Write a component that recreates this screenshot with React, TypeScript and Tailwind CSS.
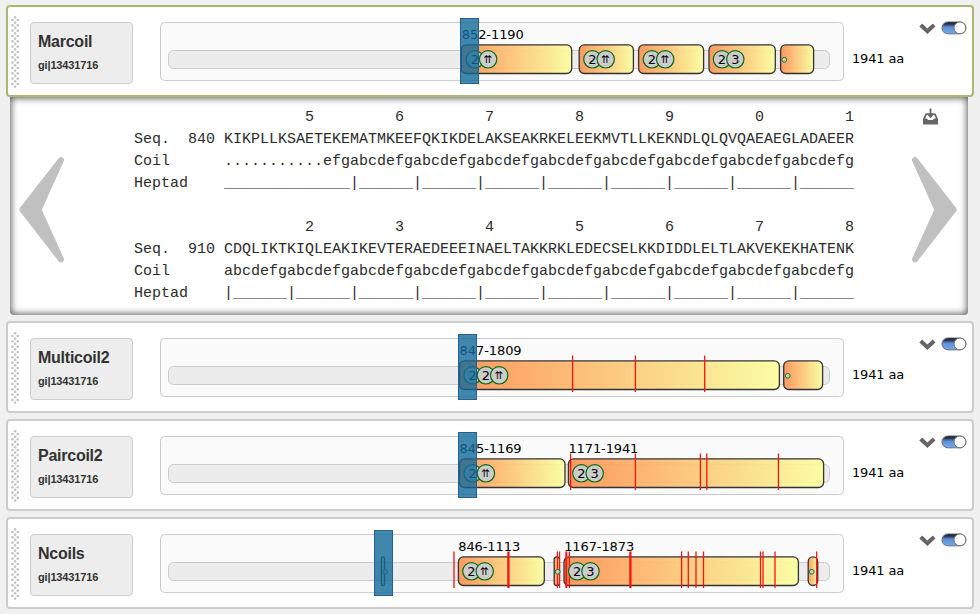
import React from 'react';

type Segment = { from: number; to: number; label?: string; labelX?: number; marks?: string[]; first?: number; dot?: number };
type Track = {
  name: string;
  active?: boolean;
  selector: number;
  segments: Segment[];
  breaks: [number, number][];
};

const UP = '⇈';

const tracks: Track[] = [
  {
    name: 'Marcoil',
    active: true,
    selector: 460,
    segments: [
      { from: 461.3, to: 571.7, label: '852-1190', labelX: 461.8, marks: ['2', UP], first: 474.8 },
      { from: 579.2, to: 633.4, marks: ['2', UP], first: 592.4 },
      { from: 638.6, to: 703.6, marks: ['2', UP], first: 651.9 },
      { from: 709, to: 775.3, marks: ['2', '3'], first: 722 },
      { from: 780.6, to: 813.6, dot: 784.3 },
    ],
    breaks: [],
  },
  {
    name: 'Multicoil2',
    selector: 458,
    segments: [
      { from: 459.4, to: 779.4, label: '847-1809', labelX: 459.6, marks: ['2', '2', UP], first: 472.6 },
      { from: 783.7, to: 822.6, dot: 787.8 },
    ],
    breaks: [[572.6, 1.3], [635.4, 1.3], [704.7, 1.3]],
  },
  {
    name: 'Paircoil2',
    selector: 458,
    segments: [
      { from: 459.4, to: 565, label: '845-1169', labelX: 459.6, marks: ['2', UP], first: 472.6 },
      { from: 568.4, to: 823.6, label: '1171-1941', labelX: 568.4, marks: ['2', '3'], first: 581.4 },
    ],
    breaks: [[570.6, 1.3], [635.4, 1.3], [700.4, 1.3], [706.8, 1.3], [778.4, 1.3]],
  },
  {
    name: 'Ncoils',
    selector: 374,
    segments: [
      { from: 381.4, to: 384.6, dot: 385 },
      { from: 458.4, to: 544.3, label: '846-1113', labelX: 458.2, marks: ['2', UP], first: 471.4 },
      { from: 554.2, to: 559.4, dot: 557.7 },
      { from: 564, to: 798.4, label: '1167-1873', labelX: 564.2, marks: ['2', '3'], first: 577.2 },
      { from: 808.2, to: 817.7, dot: 811.8 },
    ],
    breaks: [
      [454, 1.3], [508.4, 2.3], [557.4, 1.2], [559.6, 1.2], [566.3, 2], [569.4, 1.3], [630.4, 2.3],
      [681.6, 1.3], [688.3, 1.3], [696, 1.3], [703.5, 1.3], [760.5, 1.3], [763, 1.3], [775, 1.3], [816.7, 1.3],
    ],
  },
];

function Handle() {
  const dots: React.ReactNode[] = [];
  for (let i = 0; i < 13; i++) {
    const y = 4 + i * 5.33;
    dots.push(<circle key={`a${i}`} cx={1.5} cy={y} r={1.35} />, <circle key={`b${i}`} cx={6.7} cy={y} r={1.35} />);
  }
  for (let i = 0; i < 14; i++) dots.push(<circle key={`c${i}`} cx={4.1} cy={1.3 + i * 5.33} r={1.35} />);
  return <svg width="8" height="72" className="mt-[9px] shrink-0 fill-[#c6c6c6]">{dots}</svg>;
}

function Chart({ track }: { track: Track }) {
  const id = `grad-${track.name}`;
  return (
    <svg width="684" height="88" viewBox="160 2 684 88" className="ml-[27px] shrink-0 font-['DejaVu_Sans',Verdana,sans-serif] text-[13px]">
      <defs>
        <linearGradient id={id}>
          <stop offset="0" stopColor="#ff9050" />
          <stop offset="1" stopColor="#fbff9c" />
        </linearGradient>
      </defs>
      <rect x="160.5" y="17.5" width="683" height="58" rx="4" fill="#fafafa" stroke="#ccc" />
      <rect x="168.5" y="45.5" width="661" height="18" rx="5" fill="#ececec" stroke="#ccc" />
      {track.segments.map((s, i) => (
        <rect key={i} x={s.from} y="39.9" width={s.to - s.from} height="28.6" rx={Math.min(5, (s.to - s.from) / 2)}
          fill={`url(#${id})`} fillOpacity="0.9" stroke="#333" strokeWidth="1.3" />
      ))}
      {track.breaks.map(([x, w], i) => (
        <line key={i} x1={x} x2={x} y1="34.5" y2="71" stroke="#ff1010" strokeWidth={w} />
      ))}
      {track.segments.map((s, i) => (
        <g key={i}>
          {s.label && <text x={s.labelX} y="34" textLength={s.label.length === 9 ? 70 : 62}>{s.label}</text>}
          {s.dot && <circle cx={s.dot} cy="54.8" r="2.4" fill="#ccc" stroke="#207020" />}
          {s.marks?.map((m, k) => (
            <g key={k}>
              <circle cx={s.first! + k * 13.3} cy="54.3" r="8.7" fill="#ccc" stroke="#0b6b12" strokeWidth="1.2" />
              <text x={s.first! + k * 13.3} y={m === UP ? 58 : 59} textAnchor="middle" className={m === UP ? 'text-[10.5px]' : 'text-[13px]'}>{m}</text>
            </g>
          ))}
        </g>
      ))}
      <rect x={track.selector + 0.5} y="13.5" width="18" height="65" fill="#126a9b" fillOpacity="0.8" stroke="#275f91" />
    </svg>
  );
}

function Toggle() {
  return (
    <svg width="26" height="14" viewBox="0 0 26 14" className="ml-[5px]">
      <defs>
        <linearGradient id="tgl" x1="0" y1="0" x2="0" y2="1">
          <stop offset="0" stopColor="#10151f" />
          <stop offset="0.2" stopColor="#283a5c" />
          <stop offset="0.45" stopColor="#5e8fd6" />
          <stop offset="1" stopColor="#7aa8ec" />
        </linearGradient>
      </defs>
      <rect x="0.9" y="0.9" width="24.2" height="12" rx="6" fill="url(#tgl)" stroke="#666" strokeWidth="0.8" />
      <circle cx="18.9" cy="6.9" r="5.9" fill="#fdfdfd" stroke="#777" strokeWidth="1" />
    </svg>
  );
}

function TrackCard({ track }: { track: Track }) {
  return (
    <section className={`flex h-[92px] w-[968px] shrink-0 rounded-[4px] border-2 bg-white pl-[3px] ${track.active ? 'relative border-[#a9b871]' : 'border-[#ccc]'}`}>
      <Handle />
      <div className="ml-[11px] mt-[15px] h-[62px] w-[103px] shrink-0 rounded-[4px] border border-[#ccc] bg-[#ededed] pl-[7px] pt-[9px] font-['Liberation_Sans',Arial,sans-serif] font-bold text-[#333]">
        <div className="text-[16px] leading-5 tracking-[-0.25px]">{track.name}</div>
        <div className="mt-[5px] text-[11px] leading-4 tracking-[-0.15px]">gi|13431716</div>
      </div>
      <Chart track={track} />
      <div className="ml-[8px] mt-[43px] w-[68px] shrink-0 font-['DejaVu_Sans',Verdana,sans-serif] text-[13px] leading-[18px] tracking-[-0.15px] text-black">1941 aa</div>
      <div className="mt-[14px] flex h-[14px] items-start">
        <svg width="17" height="14" viewBox="0 0 17 14" className="-ml-px fill-none stroke-[#666] stroke-[4]">
          <path d="M1.7 4 L8.4 10.2 L15.1 4" />
        </svg>
        <Toggle />
      </div>
    </section>
  );
}

function Arrow({ flip }: { flip?: boolean }) {
  return (
    <svg width="46" height="108" viewBox="0 0 46 108" className={`shrink-0 fill-[#c0c0c0] stroke-[#c0c0c0] ${flip ? '-scale-x-100' : ''}`}>
      <path d="M42 4 L3.4 53.7 L42 103.4 L19.5 53.7 Z" strokeWidth="6" strokeLinejoin="round" />
    </svg>
  );
}

const ruler = (digits: string) => ' '.repeat(10) + digits.split('').map((d) => ' '.repeat(9) + d).join('');
const heptads = (n: number, unit: string) => unit.repeat(n);

const alignment = [
  ruler('5678901'),
  'Seq.  840 KIKPLLKSAETEKEMATMKEEFQKIKDELAKSEAKRKELEEKMVTLLKEKNDLQLQVQAEAEGLADAEER',
  'Coil      ...........efg' + heptads(8, 'abcdefg'),
  'Heptad    ______________' + heptads(8, '|______'),
  '',
  ruler('2345678'),
  'Seq.  910 CDQLIKTKIQLEAKIKEVTERAEDEEEINAELTAKKRKLEDECSELKKDIDDLELTLAKVEKEKHATENK',
  'Coil      ' + heptads(10, 'abcdefg'),
  'Heptad    ' + heptads(10, '|______'),
].join('\n');

function AlignmentPanel() {
  return (
    <section className="ml-1 flex h-[218px] w-[958px] shrink-0 rounded-b-[4px] bg-white shadow-[inset_0_0_7px_1px_#555]">
      <div className="ml-[9px] mt-[59px] w-[46px]"><Arrow /></div>
      <pre className="ml-[69px] mt-[10px] w-[720px] font-['Liberation_Mono','Courier_New',monospace] text-[15px] leading-[22px] text-[#2c2c2c]">{alignment}</pre>
      <div className="ml-[57px] flex w-[48px] flex-col">
        <svg width="15" height="17" viewBox="0 0 15 17" className="ml-[12px] mt-[11px]">
          <path d="M2.4 5.5 H12.6 L15 11 V16.5 H0 V11 Z" fill="#666" />
          <path d="M3.9 6.8 L2 10.6 H4 L5 12 H10 L11 10.6 H13 L11.1 6.8 Z" fill="#fff" />
          <path d="M7.5 0.5 V8.5" fill="none" stroke="#666" strokeWidth="1.8" />
          <path d="M3.3 5.6 H11.7 L7.5 10.2 Z" fill="#666" />
        </svg>
        <div className="mt-[31px]"><Arrow flip /></div>
      </div>
    </section>
  );
}

export default function App() {
  return (
    <main className="flex h-[614px] w-[980px] flex-col overflow-hidden bg-[#f0f0f0] pl-[6px] pt-[5px]">
      <TrackCard track={tracks[0]} />
      <AlignmentPanel />
      <div className="mt-[6px] flex flex-col gap-[6px]">
        {tracks.slice(1).map((t) => <TrackCard key={t.name} track={t} />)}
      </div>
    </main>
  );
}
